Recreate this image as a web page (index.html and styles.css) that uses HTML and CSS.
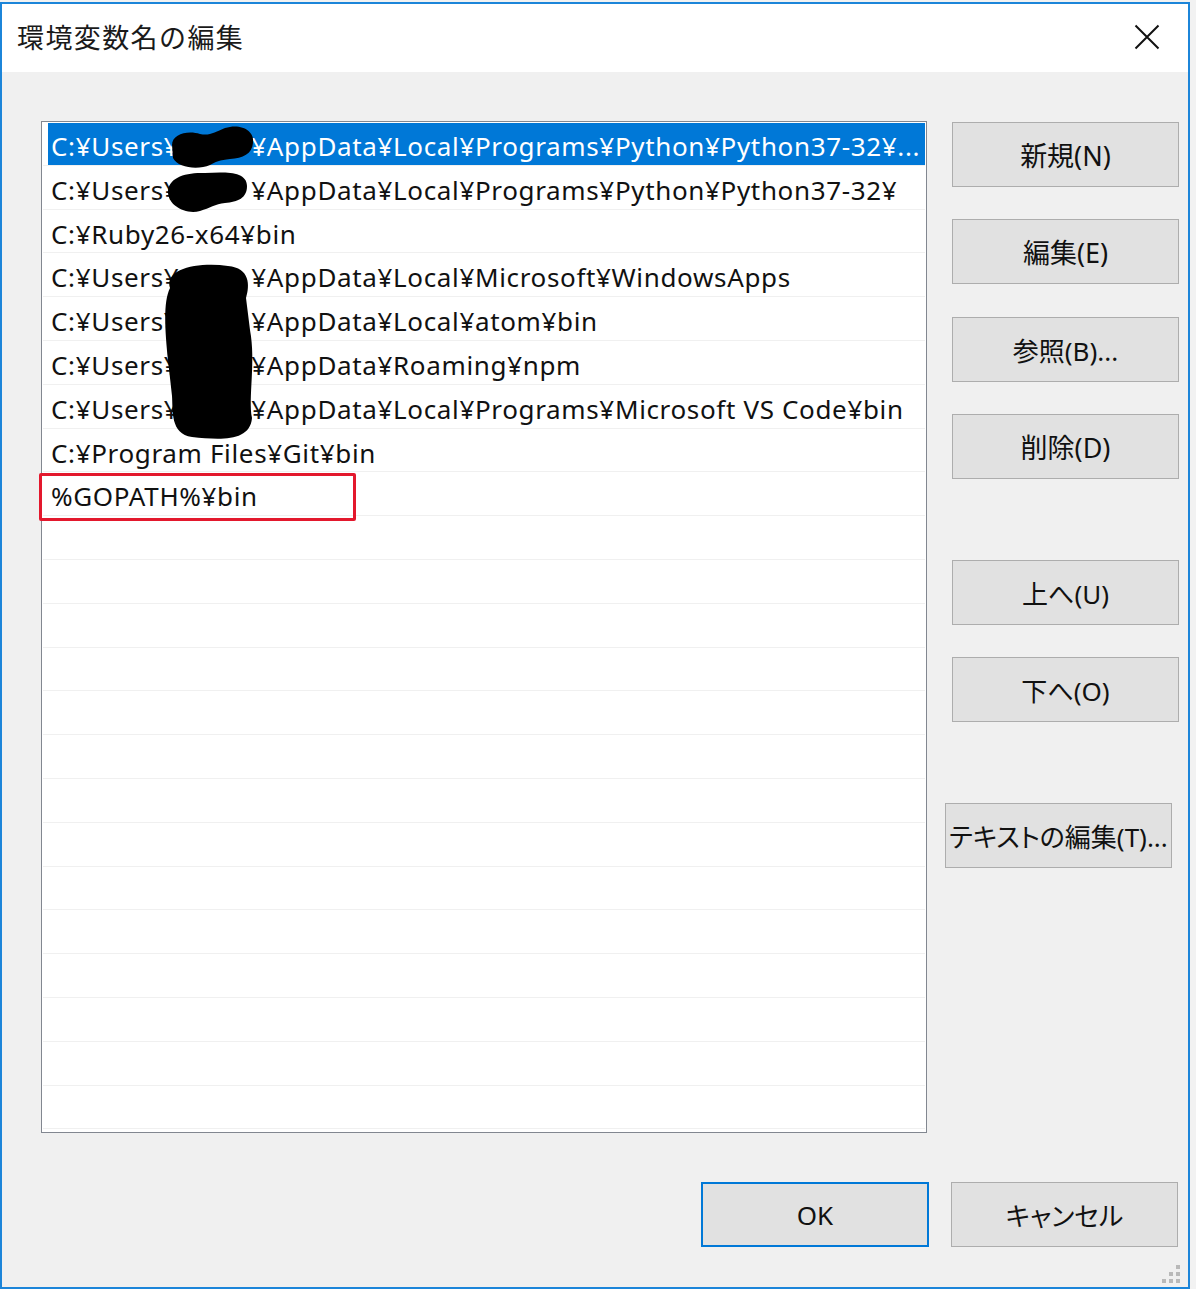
FILE: index.html
```html
<!DOCTYPE html>
<html lang="ja">
<head>
<meta charset="utf-8">
<title>環境変数名の編集</title>
<link rel="stylesheet" href="styles.css">
</head>
<body>
<div class="window">
  <div class="titlebar">
    <span class="title">環境変数名の編集</span>
    <svg class="close" width="26" height="26" viewBox="0 0 26 26" aria-label="閉じる">
      <path d="M1.5 1.5 L24.5 24.5 M24.5 1.5 L1.5 24.5" stroke="#111" stroke-width="2" fill="none"/>
    </svg>
  </div>
  <div class="content">
    <div class="main">
      <div class="listbox">
        <ul class="rows">
          <li class="row selected"><span class="sel">C:¥Users¥<span class="user"></span>¥AppData¥Local¥Programs¥Python¥Python37-32¥...</span></li>
          <li class="row">C:¥Users¥<span class="user"></span>¥AppData¥Local¥Programs¥Python¥Python37-32¥</li>
          <li class="row">C:¥Ruby26-x64¥bin</li>
          <li class="row">C:¥Users¥<span class="user"></span>¥AppData¥Local¥Microsoft¥WindowsApps</li>
          <li class="row">C:¥Users¥<span class="user"></span>¥AppData¥Local¥atom¥bin</li>
          <li class="row">C:¥Users¥<span class="user"></span>¥AppData¥Roaming¥npm</li>
          <li class="row">C:¥Users¥<span class="user"></span>¥AppData¥Local¥Programs¥Microsoft VS Code¥bin</li>
          <li class="row">C:¥Program Files¥Git¥bin</li>
          <li class="row">%GOPATH%¥bin</li>
          <li class="row"></li>
          <li class="row"></li>
          <li class="row"></li>
          <li class="row"></li>
          <li class="row"></li>
          <li class="row"></li>
          <li class="row"></li>
          <li class="row"></li>
          <li class="row"></li>
          <li class="row"></li>
          <li class="row"></li>
          <li class="row"></li>
          <li class="row"></li>
          <li class="row"></li>
        </ul>
        <svg class="redact" width="886" height="1012" viewBox="41 121 886 1012">
          <g fill="#000">
            <path d="M172 145 C172 134 188 130 200 134 C210 136 215 132 225 128 C240 123 255 130 253 143 C252 154 243 158 230 159 C220 160 215 162 210 165 C198 170 178 168 173 158 Z"/>
            <path d="M168 192 C168 178 185 172 205 173 C225 172 247 171 247 186 C247 198 238 202 225 203 C215 204 210 208 200 211 C185 215 168 205 168 192 Z"/>
            <path d="M170 288 C164 268 200 262 228 266 C250 268 250 285 246 298 L250 330 C256 362 248 398 252 418 C250 442 220 440 192 437 C170 434 173 410 172 396 L168 360 C165 330 163 302 170 288 Z"/>
          </g>
        </svg>
        <div class="mark"></div>
      </div>
      <div class="side">
        <button class="btn b-new">新規(N)</button>
        <button class="btn b-edit">編集(E)</button>
        <button class="btn b-browse">参照(B)...</button>
        <button class="btn b-del">削除(D)</button>
        <button class="btn b-up">上へ(U)</button>
        <button class="btn b-down">下へ(O)</button>
        <button class="btn b-text">テキストの編集(T)...</button>
      </div>
    </div>
    <div class="footer">
      <button class="btn ok">OK</button>
      <button class="btn">キャンセル</button>
    </div>
    <div class="grip">
      <i class="d1"></i><i class="d2"></i><i class="d3"></i><i class="d4"></i><i class="d5"></i><i class="d6"></i>
    </div>
  </div>
</div>
</body>
</html>
```

FILE: styles.css
```css
* { box-sizing: border-box; }
html, body { margin: 0; padding: 0; }
body {
  background: #f2f2f2;
  width: 1196px;
  height: 1289px;
  overflow: hidden;
  font-family: "Noto Sans", "Noto Sans CJK JP", sans-serif;
  color: #000;
}
.window {
  margin-top: 2px;
  width: 1190px;
  height: 1287px;
  border: 2px solid #1c85d9;
  background: #f0f0f0;
  display: flex;
  flex-direction: column;
  position: relative;
}
.titlebar {
  height: 68px;
  background: #fff;
  display: flex;
  align-items: center;
  justify-content: space-between;
  padding: 0 28px 4px 15px;
  flex: none;
}
.title {
  font-family: "Noto Sans CJK JP", sans-serif;
  font-size: 27px;
  letter-spacing: 1.4px;
  color: #1a1a1a;
}
.close { display: block; margin-top: 2px; }
.content {
  flex: 1;
  padding: 49px 10px 0 39px;
  position: relative;
}
.main { display: flex; align-items: flex-start; }
.listbox {
  width: 886px;
  height: 1012px;
  border: 1px solid #828790;
  background: #fff;
  position: relative;
  flex: none;
}
.rows { list-style: none; margin: 0; padding: 0; }
.row {
  height: 43.8px;
  margin: 0 1px;
  border-bottom: 1px solid #f0f0f0;
  padding: 4px 0 0 8px;
  font-size: 26px;
  letter-spacing: 0.65px;
  line-height: 40px;
  white-space: nowrap;
  overflow: hidden;
  color: #111;
}
.row.selected { padding: 1px 0 0 5px; }
.sel {
  display: block;
  height: 42px;
  line-height: 46px;
  background: #0078d7;
  color: #fff;
  padding-left: 3px;
}
.user { display: inline-block; width: 72px; }
.redact {
  position: absolute;
  left: -1px;
  top: -1px;
  overflow: visible;
  pointer-events: none;
}
.mark {
  position: absolute;
  left: -3px;
  top: 351px;
  width: 317px;
  height: 48px;
  border: 3px solid #e3182d;
  border-radius: 2px;
}
.side {
  width: 227px;
  margin-left: 25px;
  margin-top: 1px;
  display: flex;
  flex-direction: column;
  flex: none;
}
.btn {
  height: 65px;
  width: 227px;
  background: #e1e1e1;
  border: 1px solid #adadad;
  font-family: "Noto Sans", "Noto Sans CJK JP", sans-serif;
  font-size: 26px;
  font-feature-settings: "palt";
  color: #111;
  padding: 0;
  margin: 0;
}
.b-new, .b-edit, .b-del { font-size: 27px; }
.b-edit { margin-top: 32px; }
.b-browse { margin-top: 33px; }
.b-del { margin-top: 32px; }
.b-up { margin-top: 81px; }
.b-down { margin-top: 32px; }
.b-text { margin-top: 81px; margin-left: -7px; }
.footer {
  display: flex;
  justify-content: flex-end;
  gap: 22px;
  margin-top: 49px;
}
.footer .ok { width: 228px; border: 2px solid #0078d7; }
.grip {
  position: absolute;
  right: 8px;
  bottom: 4px;
  width: 18px;
  height: 18px;
}
.grip i {
  position: absolute;
  width: 4px;
  height: 4px;
  background: #b9b9b9;
}
.grip .d1 { right: 0; top: 0; }
.grip .d2 { right: 0; top: 7px; }
.grip .d3 { right: 7px; top: 7px; }
.grip .d4 { right: 0; top: 14px; }
.grip .d5 { right: 7px; top: 14px; }
.grip .d6 { right: 14px; top: 14px; }
```
